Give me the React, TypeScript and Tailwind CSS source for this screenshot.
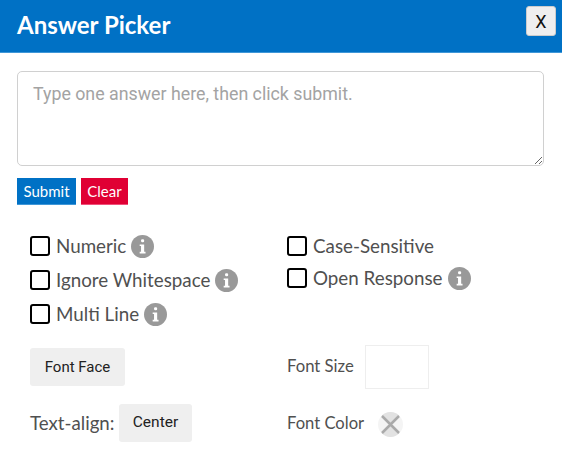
const labelFont = "font-['Lato','Noto_Sans',sans-serif]";

function Info() {
  return (
    <svg viewBox="0 0 22 22" className="w-[23px] h-[23px] shrink-0">
      <circle cx="11" cy="11" r="11" fill="#999999" />
      <rect x="9.6" y="4" width="3" height="3" rx="1.2" fill="#fff" />
      <path d="M8.3 9h4.3v7h1.3v1.6H8.3V16h1.3v-5.4H8.3z" fill="#fff" />
    </svg>
  );
}

function Check({ label, info }: { label: string; info?: boolean }) {
  return (
    <div className="flex items-center h-[20px]">
      <span className="w-[20px] h-[20px] rounded-[3px] border-2 border-[#000] bg-white shrink-0" />
      <span className="ml-[6px] mr-[5px] text-[18.8px] leading-none text-[#505050]">{label}</span>
      {info && <Info />}
    </div>
  );
}

export default function App() {
  return (
    <div className={`w-[562px] h-[465px] bg-white overflow-hidden ${labelFont}`}>
      <header className="h-[53px] bg-[#0071c5] border-b border-[#3f97d8] flex justify-between pl-[17px] pr-[6px]">
        <h1 className="text-[24px] font-bold text-white leading-[50px]">Answer Picker</h1>
        <button className="mt-[6px] w-[30px] h-[30px] bg-[#efefef] border border-[#cccccc] rounded-[3px] text-[#111] text-[18px] font-['Roboto',sans-serif]">
          X
        </button>
      </header>

      <div className="pt-[18px] pl-[17px]">
        <textarea
          placeholder="Type one answer here, then click submit."
          className="block w-[527px] h-[95px] border border-[#d0d0d0] rounded-[5px] px-[15px] py-[9px] text-[17.8px] leading-[26px] font-['Roboto',sans-serif] placeholder:text-[#a3a3a3] outline-none"
        />
        <div className="flex gap-[5px] mt-[12px]">
          <button className="w-[59px] h-[27px] bg-[#0071c5] border-b border-[#3f97d8] text-white text-[15px]">Submit</button>
          <button className="w-[47px] h-[27px] bg-[#e00034] border-b border-[#f0507a] text-white text-[15px]">Clear</button>
        </div>
      </div>

      <div className="grid grid-cols-[257px_1fr] pl-[30px] mt-[31px]">
        <div className="flex flex-col gap-[14px]">
          <Check label="Numeric" info />
          <Check label="Ignore Whitespace" info />
          <Check label="Multi Line" info />
        </div>
        <div className="flex flex-col gap-[12px]">
          <Check label="Case-Sensitive" />
          <Check label="Open Response" info />
        </div>

        <div className="mt-[21px] h-[44px] flex items-center">
          <button className="w-[95px] h-[38px] bg-[#efefef] rounded-[3px] text-[15px] text-[#222] font-['Roboto',sans-serif]">
            Font Face
          </button>
        </div>
        <div className="mt-[21px] h-[44px] flex items-center">
          <span className="w-[78px] text-[16.7px] text-[#505050]">Font Size</span>
          <input className="w-[64px] h-[44px] border border-[#eeeeee] outline-none" />
        </div>

        <div className="mt-[15px] h-[38px] flex items-center">
          <span className="text-[18.7px] text-[#505050] w-[89px]">Text-align:</span>
          <button className="w-[73px] h-[38px] bg-[#efefef] rounded-[3px] text-[15.5px] text-[#222] font-['Roboto',sans-serif]">
            Center
          </button>
        </div>
        <div className="mt-[15px] h-[38px] flex items-center">
          <span className="w-[91px] text-[16.6px] text-[#505050]">Font Color</span>
          <svg viewBox="0 0 25 25" className="w-[25px] h-[25px] mt-[2px]">
            <circle cx="12.5" cy="12.5" r="12.5" fill="#f4f4f4" />
            <path d="M12.5 12.5 3.7 3.7A12.5 12.5 0 0 1 21.3 3.7Z" fill="#e2e2e2" />
            <path d="M12.5 12.5 21.3 21.3A12.5 12.5 0 0 1 3.7 21.3Z" fill="#e2e2e2" />
            <path d="M4 4 21 21M21 4 4 21" stroke="#aaaaaa" strokeWidth="2.5" />
          </svg>
        </div>
      </div>
    </div>
  );
}
